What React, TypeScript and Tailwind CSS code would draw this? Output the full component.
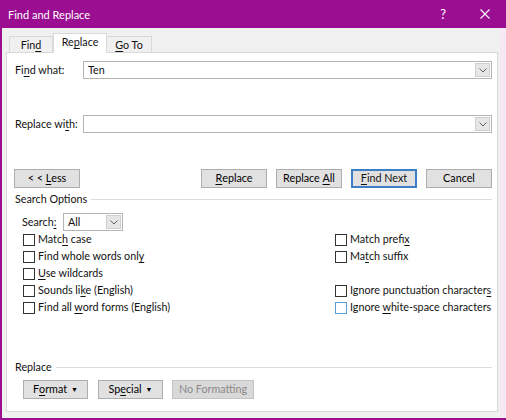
import React from "react";

const U = ({ children }: { children: React.ReactNode }) => (
  <span className="underline decoration-1 underline-offset-[2px]">{children}</span>
);

const Chevron = () => (
  <svg width="8" height="5" viewBox="0 0 8 5" className="block">
    <polyline points="0.5,0.5 4,4 7.5,0.5" fill="none" stroke="#606060" strokeWidth="1" />
  </svg>
);

const T = "text-[10.75px]";

const Combo = ({ value, className }: { value?: string; className?: string }) => (
  <div className={"flex h-[18px] min-w-0 items-stretch border border-[#b4b4b4] bg-white " + (className ?? "")}>
    <div className={"flex flex-1 items-center whitespace-nowrap pl-[4px] leading-none " + T}>{value}</div>
    <div className="m-[1px] flex w-[15px] items-center justify-center border border-[#cfcfcf] bg-[#e6e6e6]">
      <Chevron />
    </div>
  </div>
);

const Btn = ({
  children,
  className,
  focused,
  disabled,
}: {
  children: React.ReactNode;
  className?: string;
  focused?: boolean;
  disabled?: boolean;
}) => (
  <div
    className={
      "flex h-[19px] items-center justify-center whitespace-nowrap border leading-none text-[10.75px] " +
      (focused
        ? "border-[#3c7fc6] bg-[#e1e1e1] outline outline-1 -outline-offset-2 outline-[#3c7fc6] "
        : disabled
        ? "border-[#c4c4c4] bg-[#d9d9d9] text-[#8a8a8a] "
        : "border-[#adadad] bg-[#e1e1e1] text-black ") +
      (className ?? "")
    }
  >
    {children}
  </div>
);

const Check = ({ children, hover }: { children: React.ReactNode; hover?: boolean }) => (
  <div className="flex h-[17px] items-center">
    <div
      className={
        "h-[12px] w-[12px] shrink-0 border bg-white " + (hover ? "border-[#5aa0d8]" : "border-[#333333]")
      }
    />
    <div className="ml-[3px] whitespace-nowrap text-[10.75px] leading-none">{children}</div>
  </div>
);

export default function App() {
  return (
    <div
      className="flex h-[420px] w-[506px] flex-col overflow-hidden bg-[#9b0d91] text-[#111]"
      style={{ fontFamily: 'Lato, "Noto Sans", sans-serif' }}
    >
      {/* Title bar */}
      <div className="flex h-[28px] shrink-0 items-center pl-[8px] text-white">
        <div className="flex-1 whitespace-nowrap text-[11px] leading-none">Find and Replace</div>
        <div className="mr-[34px] text-[13px] leading-none">?</div>
        <svg width="10" height="10" viewBox="0 0 10 10" className="mr-[16px]">
          <path d="M0.5 0.5 L9.5 9.5 M9.5 0.5 L0.5 9.5" stroke="white" strokeWidth="1.1" />
        </svg>
      </div>

      {/* Body */}
      <div className="flex min-h-0 flex-1">
        <div className="w-[2px] shrink-0 bg-[#9b0d91]" />
        <div className="flex min-w-0 flex-1 flex-col bg-[#f0f0f0] pl-[4px] pr-[2px]">
          {/* Tabs */}
          <div className="flex h-[24px] items-end pl-[3px]">
            <div className="-mb-px flex h-[17px] w-[44px] items-center justify-center border border-b-0 border-[#d9d9d9] bg-[#f0f0f0] text-[10.75px] leading-none">
              Fin<U>d</U>
            </div>
            <div className="relative z-10 -mb-px flex h-[20px] w-[54px] items-center justify-center border border-b-0 border-[#d9d9d9] bg-white pb-[2px] text-[10.75px] leading-none">
              Re<U>p</U>lace
            </div>
            <div className="-mb-px flex h-[17px] w-[45px] items-center justify-center border border-b-0 border-l-0 border-[#d9d9d9] bg-[#f0f0f0] text-[10.75px] leading-none">
              <U>G</U>o To
            </div>
          </div>

          {/* Panel */}
          <div className="flex h-[360px] min-w-0 flex-col border border-[#d9d9d9] bg-white pl-[8px] pr-[5px]">
            <div className="mt-[8px] flex items-center">
              <div className="w-[68px] shrink-0 whitespace-nowrap text-[10.75px] leading-none">
                Fi<U>n</U>d what:
              </div>
              <Combo value="Ten" className="flex-1" />
            </div>
            <div className="mt-[36px] flex items-center">
              <div className="w-[68px] shrink-0 whitespace-nowrap text-[10.75px] leading-none">
                Replace wi<U>t</U>h:
              </div>
              <Combo className="flex-1" />
            </div>

            <div className="mt-[36px] flex items-center">
              <Btn className="-ml-px w-[66px]">
                &lt; &lt;&nbsp;<U>L</U>ess
              </Btn>
              <div className="flex-1" />
              <div className="flex gap-[9px]">
                <Btn className="w-[66px]">
                  <U>R</U>eplace
                </Btn>
                <Btn className="w-[66px]">
                  Replace&nbsp;<U>A</U>ll
                </Btn>
                <Btn className="w-[66px]" focused>
                  <U>F</U>ind Next
                </Btn>
                <Btn className="w-[66px]">Cancel</Btn>
              </div>
            </div>

            <div className="mt-[4px] flex items-center gap-[4px]">
              <div className="whitespace-nowrap text-[10.75px] leading-[14px]">Search Options</div>
              <div className="h-px flex-1 bg-[#dcdcdc]" />
            </div>

            <div className="mt-[7px] flex items-center pl-[7px]">
              <div className="w-[41px] shrink-0 whitespace-nowrap text-[10.75px] leading-none">
                Search<U>:</U>
              </div>
              <Combo value="All" className="w-[60px]" />
            </div>

            <div className="mt-[0px] flex pl-[8px]">
              <div className="flex w-[312px] shrink-0 flex-col">
                <Check>
                  Matc<U>h</U> case
                </Check>
                <Check>
                  Find whole words onl<U>y</U>
                </Check>
                <Check>
                  <U>U</U>se wildcards
                </Check>
                <Check>
                  Sounds li<U>k</U>e (English)
                </Check>
                <Check>
                  Find all <U>w</U>ord forms (English)
                </Check>
              </div>
              <div className="flex min-w-0 flex-col">
                <Check>
                  Match prefi<U>x</U>
                </Check>
                <Check>
                  Ma<U>t</U>ch suffix
                </Check>
                <div className="h-[17px]" />
                <Check>
                  Ignore punctuation character<U>s</U>
                </Check>
                <Check hover>
                  Ignore <U>w</U>hite-space characters
                </Check>
              </div>
            </div>

            <div className="mt-[44px] flex items-center gap-[4px]">
              <div className="whitespace-nowrap text-[10.75px] leading-[14px]">Replace</div>
              <div className="h-px flex-1 bg-[#dcdcdc]" />
            </div>

            <div className="mt-[6px] flex items-center pl-[8px]">
              <Btn className="w-[65px]">
                F<U>o</U>rmat
                <span className="ml-[4px] text-[7px]">▼</span>
              </Btn>
              <Btn className="ml-[10px] w-[65px]">
                Sp<U>e</U>cial
                <span className="ml-[4px] text-[7px]">▼</span>
              </Btn>
              <Btn className="ml-[9px] w-[82px]" disabled>
                No Formatting
              </Btn>
            </div>
          </div>
        </div>
        <div className="w-[6px] shrink-0 bg-[#f6e8f5]" />
      </div>
      <div className="h-[2px] shrink-0 bg-[#9b0d91]" />
    </div>
  );
}
